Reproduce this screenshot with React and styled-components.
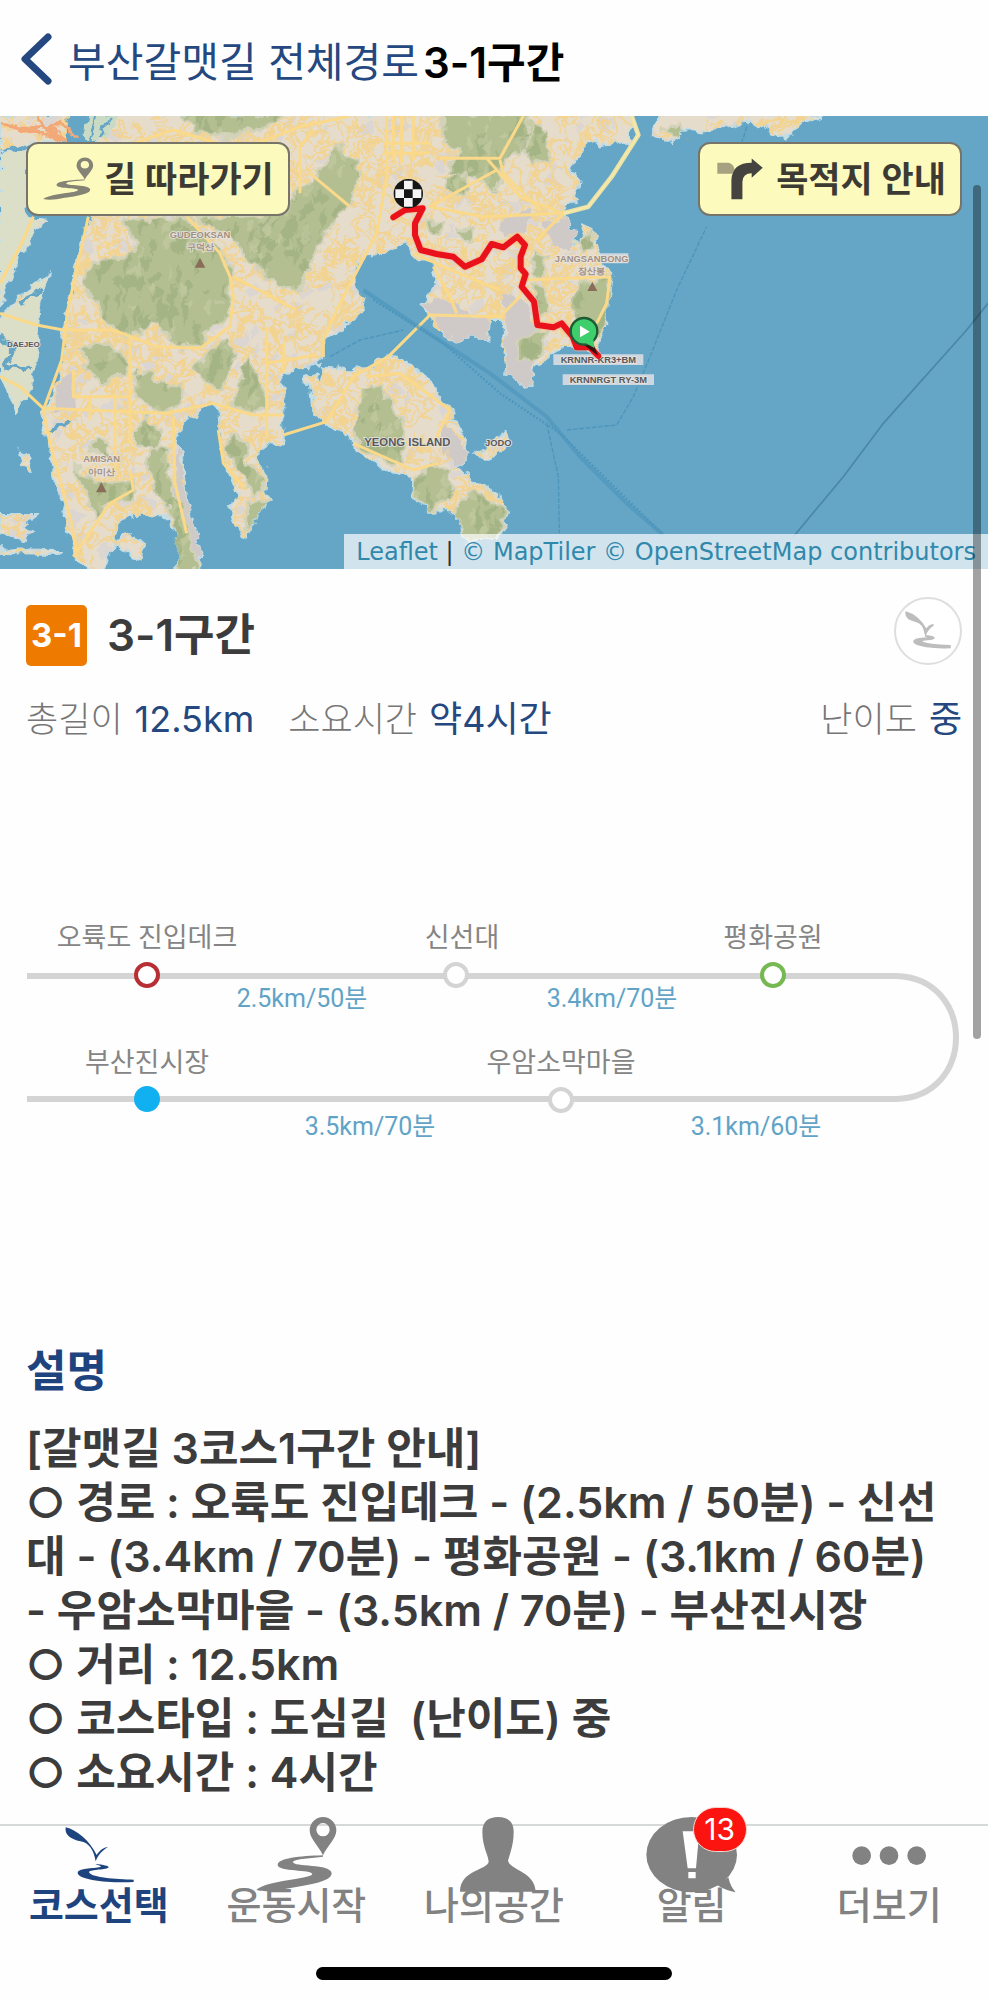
import React from 'react';
import styled, { createGlobalStyle } from "styled-components";

const GlobalStyle = createGlobalStyle`
    * { box-sizing: border-box; }
    body {
        margin: 0;
        background-color: #fefefe;
        color: #3c3c3c;
        font-family: Inter, "Noto Sans CJK KR", sans-serif;
    }
    a { text-decoration: none; color: inherit; }
    button { font-family: inherit; cursor: pointer; }
    h1, h2, h3, p, dl, dd { margin: 0; }
`;

const Screen = styled.div`
    position: relative;
    display: flex;
    flex-direction: column;
    min-height: 100vh;
`;

const Header = styled.header`
    display: flex;
    align-items: center;
    gap: 4px;
    height: 116px;
    padding: 2px 20px 0;
    font-size: 41px;
`;
const BackLink = styled.a`
    display: flex;
    align-items: center;
    gap: 16px;
    color: #24487f;
`;
const PageTitle = styled.h1`
    font-size: 42px;
    font-weight: 600;
    color: #000;
`;

const MapArea = styled.section`
    position: relative;
    height: 453px;
    overflow: hidden;
    background-color: #65a5c6;
`;
const MapDrawing = styled.svg`
    display: block;
    width: 100%;
    height: 100%;
`;
const MapButtons = styled.div`
    position: absolute;
    top: 26px;
    left: 26px;
    right: 26px;
    display: flex;
    justify-content: space-between;
`;
const MapButton = styled.button`
    display: flex;
    align-items: center;
    gap: 10px;
    height: 74px;
    padding: 0 14px;
    border: 2px solid #77746a;
    border-radius: 12px;
    background-color: #fcfabd;
    color: #3d3a34;
    font-size: 35px;
    font-weight: 600;
    line-height: 40px;
    white-space: nowrap;
`;
const Attribution = styled.div`
    position: absolute;
    right: 0;
    bottom: 0;
    height: 35px;
    padding: 0 12px;
    background-color: rgba(255, 255, 255, 0.7);
    color: #333;
    font-family: "DejaVu Sans", sans-serif;
    font-size: 24px;
    line-height: 36px;
    white-space: nowrap;

    a { color: #3088ab; }
`;

const Content = styled.main`
    flex: 1;
    padding: 28px 26px 0;
`;
const CourseRow = styled.div`
    display: flex;
    align-items: center;
    gap: 20px;
    height: 76px;
`;
const CourseBadge = styled.span`
    display: flex;
    align-items: center;
    justify-content: center;
    width: 61px;
    height: 61px;
    border-radius: 5px;
    background-color: #ee7a00;
    color: #fff;
    font-size: 33px;
    font-weight: 700;
`;
const CourseName = styled.h2`
    flex: 1;
    font-size: 44px;
    font-weight: 600;
    line-height: 60px;
`;
const StampButton = styled.button`
    align-self: flex-start;
    width: 68px;
    height: 68px;
    padding: 0;
    border: 2px solid #dedede;
    border-radius: 50%;
    background-color: #fff;
    color: #bdbdbd;
`;
const Stats = styled.dl`
    display: flex;
    gap: 34px;
    margin-top: 16px;
    font-size: 36px;
    line-height: 60px;
`;
const Stat = styled.div`
    display: flex;
    gap: 12px;

    &:last-child { margin-left: auto; }
    dt { color: #767676; font-size: 35px; font-weight: 300; }
    dd { color: #24487f; }
`;

const RouteDrawing = styled.svg`
    display: block;
    width: 100%;
    margin-top: 142px;
    font-family: Roboto, "Noto Sans CJK KR", sans-serif;
    font-size: 27px;
    text-anchor: middle;
`;

const Description = styled.section`
    margin-top: 190px;
`;
const DescTitle = styled.h3`
    color: #1e447f;
    font-size: 44px;
    font-weight: 600;
    line-height: 60px;
`;
const DescText = styled.p`
    margin-top: 20px;
    font-size: 43px;
    font-weight: 600;
    line-height: 54px;
    white-space: pre;
`;

const TabBar = styled.nav`
    display: grid;
    grid-template-columns: repeat(5, 1fr);
    height: 143px;
    border-top: 2px solid #d6d9da;
`;
const Tab = styled.a`
    position: relative;
    display: flex;
    flex-direction: column;
    align-items: center;
    margin-top: -9px;
    color: ${(props) => (props.$active ? "#1e447f" : "#828282")};
    font-size: 38px;
    font-weight: ${(props) => (props.$active ? 700 : 500)};
    line-height: 44px;
    white-space: nowrap;

    svg { flex: none; margin-bottom: -10px; }
`;
const AlarmCount = styled.span`
    position: absolute;
    top: -10px;
    left: calc(50% + 1px);
    width: 54px;
    height: 45px;
    border: 1px solid #f7d6cf;
    border-radius: 23px;
    background-color: #fb1410;
    color: #fff;
    font-size: 30px;
    font-weight: 400;
    line-height: 43px;
    text-align: center;
`;
const HomeArea = styled.div`
    display: flex;
    justify-content: center;
    height: 33px;
`;
const HomeBar = styled.div`
    width: 36%;
    height: 13px;
    border-radius: 7px;
    background-color: #000;
`;
const ScrollThumb = styled.div`
    position: absolute;
    top: 185px;
    right: 7px;
    width: 8px;
    height: 854px;
    border-radius: 4px;
    background-color: rgba(0, 0, 0, 0.36);
`;

// map shapes
const LAND = [
    "M0 18H215L195 90L80 98L0 125Z",
    "M0 132L80 118V318L130 330L90 390L50 450L0 590Z",
    "M0 622L60 560L145 490L118 600L110 720L90 830L50 910L30 850L0 800Z",
    "M355 10L320 60L290 100L272 320L245 380L203 600L185 750L155 870L125 900L140 1000L185 1180L220 1330L262 1385H310L335 1310L350 1240L410 1215L500 1212L535 1290V1385H600L605 1310L560 1180L548 1060L530 1000L540 930L590 912L630 880L652 895L655 960L670 1060L720 1150L690 1180L715 1270L740 1285L765 1220L815 1170L795 1150L800 1100L780 1050L770 1020L800 1000L845 1010L850 960V785L950 765L970 740V690L1010 660L1090 600L1100 565L1070 545L1075 450L1180 412L1228 400L1240 450L1290 460L1310 520L1265 580L1290 640L1340 682L1465 684L1470 630L1505 630L1520 790L1560 830L1612 820L1590 790L1690 710L1790 722L1815 660L1830 560L1838 500L1800 440L1775 350L1755 340L1740 400L1715 400L1725 370L1690 310L1728 265L1735 195L1712 190L1725 150L1760 98L1790 90L1800 110L1885 90L1902 50L1890 10Z",
    "M1985 10L1958 75L2018 105L2050 62L2140 60L2250 32L2335 82L2375 78L2405 40L2490 10Z",
    "M910 800L930 795L975 812L960 770L1050 775L1120 765L1165 740L1210 752L1270 790L1350 900L1412 1032L1370 1060L1420 1112L1510 1172L1524 1205L1500 1290L1395 1290L1372 1200L1290 1202L1235 1160V1100L1150 1077L1060 1000L985 945L940 910L935 850Z",
    "M1430 1040L1480 980L1520 965L1530 1000L1490 1040Z",
    "M335 1295L380 1275L432 1300L425 1345L370 1325Z",
    "M0 1215L110 1215L60 1250L100 1265L70 1285L0 1270Z",
    "M0 1318L185 1320L180 1335L0 1332Z",
    "M60 1020L90 1035L98 1080L70 1070Z",
];
const DELTA = "M0 132L80 118V318H130L0 590ZM0 622L145 490V910H0Z";
const GREY = [
    "M1265 580L1310 560L1465 640V684H1340Z",
    "M1512 550L1560 560L1600 640L1625 690L1590 790L1612 820L1560 830L1520 790Z",
    "M1630 340L1700 320L1735 380L1690 420L1640 390Z",
    "M1110 510L1225 395L1240 420L1150 480Z",
    "M180 800L220 790L225 900H160Z",
    "M530 1000L560 1180L605 1310L595 1377L520 1180Z",
    "M1340 940L1412 1032L1370 1060L1310 990Z",
    "M1500 330L1590 300L1590 370L1510 380Z",
];
const HILLS = [
    "M540 10L600 70L680 80L740 70L820 40L850 10Z",
    "M1010 95L1030 130L1070 150L1085 190L1060 230L1065 280L1000 330L960 400L930 460L900 540L830 530L740 440L690 380L580 320H720L860 310L880 250L950 200L985 140Z",
    "M370 330L560 320L600 360L660 420L695 490L690 620L640 650L600 700L540 720L470 640L390 680L320 640L290 580L250 520L270 460L380 440L410 400Z",
    "M240 710L320 700L385 740L380 790L310 820L260 780Z",
    "M580 780L620 720L690 690L705 720L670 840L620 810Z",
    "M740 750L775 800L805 890L750 915L700 880Z",
    "M405 790L460 785L465 820L540 830L545 880L490 910L405 860Z",
    "M410 940L440 915L480 960L475 1020L410 1000Z",
    "M280 990L325 1000L330 1045L270 1020Z",
    "M220 1070L290 1120L405 1110L400 1160L330 1180L290 1220L260 1160Z",
    "M440 1020L500 1010L520 1160L555 1210L570 1300L600 1385H540L520 1230L460 1130Z",
    "M680 975L740 990L740 1050L790 1100L795 1150L760 1160L720 1090L685 1040Z",
    "M740 1180L815 1170L770 1225L735 1270Z",
    "M1090 840L1130 825L1180 890L1215 950L1210 1050L1170 1060L1105 1020L1060 985Z",
    "M1240 1120L1290 1065L1350 1080L1355 1160L1290 1202L1240 1165Z",
    "M1370 1200L1420 1140L1520 1200L1490 1290H1395Z",
    "M1320 10L1600 10L1590 80L1560 130L1510 150L1480 250L1430 210L1340 180L1380 130L1330 90Z",
    "M1590 30L1640 60L1650 150L1600 160L1570 110Z",
    "M1330 200L1400 190L1400 260L1350 250Z",
    "M1740 390L1775 360L1780 420L1745 425Z",
    "M1730 520L1830 500L1830 600L1800 680L1740 640L1715 590Z",
    "M1590 670L1640 660L1620 740L1555 745L1550 700Z",
    "M1600 430L1640 440L1630 500L1600 490Z",
    "M1590 520L1630 530L1650 610L1620 620Z",
    "M1280 330L1330 340L1320 370L1290 360Z",
    "M1370 360L1420 355L1410 395L1380 390Z",
    "M1990 60L2040 40L2060 65L2055 100Z",
];
const ROADS = [
    "M0 610L110 645L190 660H340L470 710L600 715L690 650L700 560L690 500L660 430L560 320",
    "M0 800L60 830L130 895L500 910L640 880L760 915H850",
    "M265 320L203 600L185 750L130 900L150 1000L215 1240L230 1340",
    "M220 780V860H390M270 860V930M345 850V1080M390 680V1000",
    "M970 740V690L1010 600L1130 370L1160 200V18",
    "M1180 18V150M1205 18V160M1240 18V150M1150 100H1290M1150 130H1290",
    "M850 975L980 935L1060 800L1165 740L1290 615L1500 620L1560 560L1570 450",
    "M800 760L950 735M850 700V785M800 650V980M700 500L890 600",
    "M1320 145H1500L1580 0M1460 145L1560 260L1690 310L1610 390",
    "M1500 150L1510 190L1620 300M1490 180L1290 290L1450 320L1690 310",
    "M0 520L60 410L100 320",
    "M370 110L520 60L720 120L900 50L1050 18",
    "M930 190L1050 290M900 250V110L940 60",
    "M220 1340L330 1180L400 1140L390 1080M520 920L525 1120L560 1270",
    "M655 960L670 1060L730 1130M1060 1000L1240 1080L1310 1060",
    "M1100 800L1200 790L1350 900L1310 980",
    "M1565 510L1830 500L1820 580L1790 640",
    "M1240 430L1400 500L1500 540M1300 470L1350 560L1370 610",
];

// small streets, spread with a fixed seed so the map is the same on every render
let seed = 29;
const rand = () => {
    seed = (seed * 16807) % 2147483647;
    return seed / 2147483647;
};
const makeStreets = (count, step) => {
    let d = "";
    for (let i = 0; i < count; i++) {
        let x = rand() * 2450;
        let y = 18 + rand() * 1340;
        d += `M${Math.round(x)} ${Math.round(y)}`;
        for (let j = 0; j < 4; j++) {
            x += (rand() - 0.5) * step;
            y += (rand() - 0.5) * step;
            d += `L${Math.round(x)} ${Math.round(y)}`;
        }
    }
    return d;
};
const makeSpots = (count, w, h) => {
    let d = "";
    for (let i = 0; i < count; i++) {
        const x = Math.round(rand() * 2400);
        const y = Math.round(rand() * 1360);
        const a = Math.round(w * (0.4 + rand()));
        const b = Math.round(h * (0.4 + rand()));
        d += `M${x} ${y}l${a} ${-b}l${Math.round(a / 2)} ${b}l${-a} ${b}z`;
    }
    return d;
};
const streets = makeStreets(2700, 80);
const paleBlocks = makeSpots(600, 30, 20);
const shade = makeSpots(1100, 22, 34);
const light = makeSpots(700, 16, 24);

const ROUTE = "M1180 322L1215 300L1268 295L1245 340L1245 375L1262 420L1310 432L1360 440L1395 470L1445 448L1475 402L1510 412L1552 380L1575 405L1562 440L1562 475L1577 492L1565 530L1602 575L1612 645L1660 652L1685 640L1718 680L1730 712H1770L1795 738";

function CourseMap() {
    return (
        <MapDrawing viewBox="0 18 2964 1359" preserveAspectRatio="xMidYMid slice" role="img" aria-label="3-1구간 지도">
            <defs>
                <clipPath id="land"><path d={LAND.join("")} /></clipPath>
                <clipPath id="hills"><path d={HILLS.join("")} /></clipPath>
                <filter id="rough" filterUnits="userSpaceOnUse" x="-20" y="0" width="3000" height="1400">
                    <feTurbulence type="fractalNoise" baseFrequency="0.025" numOctaves="3" seed="4" />
                    <feDisplacementMap in="SourceGraphic" scale="42" xChannelSelector="R" yChannelSelector="G" />
                </filter>
            </defs>
            <g filter="url(#rough)">
                <path d={LAND.join("")} fill="#e6dccb" stroke="#c2dde6" strokeWidth="6" />
                <g clipPath="url(#land)" fill="none">
                    <path d={paleBlocks} fill="#d9d5d3" opacity="0.9" />
                    <path d={streets} stroke="#f4d28a" strokeWidth="5" opacity="0.9" />
                    <path d={GREY.join("")} fill="#cfcac8" />
                    <path d={DELTA} fill="#dcdfc8" />
                    <path d={HILLS.join("")} fill="#b3bf91" stroke="#d2d2b8" strokeWidth="8" strokeLinejoin="round" />
                </g>
                <g clipPath="url(#hills)">
                    <path d={shade} fill="#98a97a" opacity="0.5" />
                    <path d={light} fill="#c4cba4" opacity="0.6" />
                </g>
                <path d="M205 10H265L255 90H195Z" fill="#65a5c6" />
                <path d="M265 10H355L320 90H250Z" fill="#c9dbc5" />
                <g fill="none" stroke="#65a5c6" strokeWidth="7">
                    <path d="M285 18L268 90M330 18L300 85M0 125L80 98" />
                    <path d="M60 575L130 540M0 680L40 720L20 770L90 780M145 965L205 945" strokeWidth="12" />
                </g>
                <path d="M1070 500Q1075 435 1115 435Q1085 460 1135 520L1120 540L1100 520V570L1070 545Z" fill="#65a5c6" />
                <path d="M0 45L90 55L180 45L230 80M20 45L200 90M110 18L180 85" fill="none" stroke="#f2a877" strokeWidth="12" />
            </g>
            <g fill="none" stroke="#fad98a" strokeLinejoin="round">
                <path d={ROADS.join("")} strokeWidth="9" />
                <path d="M1895 18L1915 75L1835 200L1765 290L1690 310" stroke="#e9e2a6" strokeWidth="14" />
                <path d="M1895 18L1915 75L1835 200L1765 290L1690 310" stroke="#f7e9ad" strokeWidth="5" />
            </g>
            <g fill="none" stroke="#4390b8" strokeWidth="7" opacity="0.75">
                <path d="M1090 540L1240 640L1470 790L1640 920L1740 1040L1880 1180L1990 1275" strokeWidth="12" opacity="0.6" />
                <path d="M1120 570L1330 700L1500 850L1680 970L1990 1275" strokeDasharray="5 6" />
                <path d="M990 740L1080 690L1210 660M1640 940L1675 1100L1678 1270M1700 960L1850 945L1900 860L1950 740L2030 540L2120 350M2240 50L2225 100" strokeWidth="4" strokeDasharray="14 5" />
                <path d="M2380 1280L2530 1100L2650 940L2900 660L2964 580" strokeWidth="5" stroke="#427e9c" />
            </g>
            <g fill="#d9dde1" opacity="0.9">
                <path d="M1660 733H1930V765H1660ZM1688 793H1962V825H1688ZM1795 430H1885V460H1795Z" />
            </g>
            <g fontFamily="Liberation Sans" fontWeight="700" fontSize="28" fill="#56585a" stroke="#e8e4de" strokeWidth="5" paintOrder="stroke" textAnchor="middle">
                <text x="1222" y="1007" fontSize="34">YEONG ISLAND</text>
                <text x="1495" y="1007">JODO</text>
                <text x="70" y="712" fontSize="24">DAEJEO</text>
                <text x="1795" y="759">KRNNR-KR3+BM</text>
                <text x="1825" y="819">KRNNRGT RY-3M</text>
                <g fill="#a08f82">
                    <text x="600" y="384">GUDEOKSAN</text>
                    <text x="600" y="420">구덕산</text>
                    <text x="305" y="1055">AMISAN</text>
                    <text x="305" y="1095">아미산</text>
                    <text x="1775" y="456">JANGSANBONG</text>
                    <text x="1775" y="492">장산봉</text>
                </g>
            </g>
            <path d="M600 443L616 473H584ZM304 1117L320 1147H288ZM1777 515L1792 543H1762Z" fill="#8a6d59" />
            <path d={ROUTE} fill="none" stroke="#f6b3a0" strokeWidth="25" strokeLinejoin="round" opacity="0.5" />
            <path d={ROUTE} fill="none" stroke="#e9121a" strokeWidth="18" strokeLinejoin="round" strokeLinecap="round" />
            <circle cx="1225" cy="251" r="44" fill="#161616" />
            <path d="M1212 212h26v26h-26zM1212 264h26v26h-26zM1186 238h26v26h-26zM1238 238h26v26h-26z" fill="#f4f4f4" />
            <path d="M1745 700L1795 738L1775 690Z" fill="#3c1012" />
            <circle cx="1752" cy="664" r="40" fill="#3fce6c" stroke="#1d5a35" strokeWidth="7" />
            <path d="M1755 698L1783 714L1780 686Z" fill="#3fce6c" />
            <path d="M1740 647V682L1769 665Z" fill="#fff" />
        </MapDrawing>
    );
}

const PATH_PIN = "M970 196C900 198 834 205 834 225C836 246 935 238 938 252C935 268 800 270 770 300C800 308 840 300 860 296C930 285 995 275 996 250C994 220 880 232 880 216C882 206 940 204 970 200ZM970 81A40 40 0 0 0 930 121C930 146 955 165 970 196C985 165 1010 146 1010 121A40 40 0 0 0 970 81ZM970 99A20 20 0 1 1 970 139A20 20 0 1 1 970 99Z";
const PATH_GULL = "M196 112C230 120 268 152 289 195C300 178 312 172 323 171C306 182 295 192 286 214C280 180 266 158 240 154C212 148 192 135 196 112ZM285 222C310 224 325 228 325 232C322 240 270 238 266 246C268 262 350 268 400 269L400 276C330 280 232 270 232 248C234 232 290 236 302 230C300 226 290 225 285 222Z";
const PATH_PERSON = "M1494 81C1465 81 1447 95 1447 125C1447 170 1465 195 1466 215C1462 240 1380 240 1380 305H1607C1605 245 1530 240 1524 212C1530 190 1541 165 1541 125C1541 95 1522 81 1494 81Z";

const tabs = [
    { label: "코스선택", view: "146 81 300 228", art: <path d={PATH_GULL} /> },
    { label: "운동시작", view: "739 81 300 228", art: <path d={PATH_PIN} fillRule="evenodd" /> },
    { label: "나의공간", view: "1332 81 300 228", art: <path d={PATH_PERSON} /> },
    {
        label: "알림",
        view: "1925 81 300 228",
        count: 13,
        art: (
            <>
                <ellipse cx="2074" cy="194" rx="136" ry="113" />
                <path d="M2184 262Q2190 290 2206 307Q2180 303 2150 285Z" />
                <path d="M2047 124H2097L2087 235H2062ZM2064 246H2086V265H2064Z" fill="#fff" />
            </>
        ),
    },
    {
        label: "더보기",
        view: "2518 81 300 228",
        art: (
            <>
                <circle cx="2586" cy="197" r="28" />
                <circle cx="2668" cy="197" r="28" />
                <circle cx="2751" cy="197" r="28" />
            </>
        ),
    },
];

const stops = [
    { name: "오륙도 진입데크", x: 147, y: 84, color: "#b72f34" },
    { name: "신선대", x: 456, y: 84, color: "#d4d4d4", labelX: 462 },
    { name: "평화공원", x: 773, y: 84, color: "#76b852" },
    { name: "부산진시장", x: 147, y: 208, color: "#11b0f0", fill: "#11b0f0" },
    { name: "우암소막마을", x: 561, y: 209, color: "#d4d4d4" },
];
const legs = [
    { text: "2.5km/50분", x: 302, y: 116 },
    { text: "3.4km/70분", x: 612, y: 116 },
    { text: "3.5km/70분", x: 370, y: 244 },
    { text: "3.1km/60분", x: 756, y: 244 },
];

function RouteDiagram() {
    return (
        <RouteDrawing viewBox="26 0 936 260">
            <path d="M27 85H896C976 87 976 206 896 208H27" fill="none" stroke="#d4d4d4" strokeWidth="6" />
            {stops.map((s) => (
                <g key={s.name}>
                    <circle cx={s.x} cy={s.y} r="11" fill={s.fill || "#fff"} stroke={s.color} strokeWidth="4" />
                    <text x={s.labelX || s.x} y={s.y < 100 ? 56 : 181} fill="#858585">{s.name}</text>
                </g>
            ))}
            {legs.map((l) => (
                <text key={l.text} x={l.x} y={l.y} fill="#61a3c6" fontSize="25">{l.text}</text>
            ))}
        </RouteDrawing>
    );
}

const description = `[갈맷길 3코스1구간 안내]
○ 경로 : 오륙도 진입데크 - (2.5km / 50분) - 신선
대 - (3.4km / 70분) - 평화공원 - (3.1km / 60분)
- 우암소막마을 - (3.5km / 70분) - 부산진시장
○ 거리 : 12.5km
○ 코스타입 : 도심길  (난이도) 중
○ 소요시간 : 4시간`;

function App() {
    return (
        <Screen>
            <GlobalStyle />
            <Header>
                <BackLink href="#courses">
                    <svg width="32" height="52" viewBox="0 0 32 52" fill="none" stroke="currentColor" strokeWidth="7" strokeLinecap="round" strokeLinejoin="round">
                        <path d="M28 4L5 26L28 48" />
                    </svg>
                    부산갈맷길 전체경로
                </BackLink>
                <PageTitle>3-1구간</PageTitle>
            </Header>

            <MapArea>
                <CourseMap />
                <MapButtons>
                    <MapButton type="button">
                        <svg width="52" height="44" viewBox="764 78 250 232" preserveAspectRatio="none" fill="#858276">
                            <path d={PATH_PIN} fillRule="evenodd" />
                        </svg>
                        길 따라가기
                    </MapButton>
                    <MapButton type="button">
                        <svg width="52" height="44" viewBox="685 143 146 128">
                            <path d="M692 160H725Q740 165 742 180L735 192H692Z" fill="#a5a181" />
                            <path d="M733 266V210Q735 160 792 160V147L824 174L792 203V190Q766 190 765 215V266Z" fill="#45433f" />
                        </svg>
                        목적지 안내
                    </MapButton>
                </MapButtons>
                <Attribution>
                    <a href="#leaflet">Leaflet</a> | <a href="#maptiler">© MapTiler</a> <a href="#osm">© OpenStreetMap contributors</a>
                </Attribution>
            </MapArea>

            <Content>
                <CourseRow>
                    <CourseBadge>3-1</CourseBadge>
                    <CourseName>3-1구간</CourseName>
                    <StampButton type="button" aria-label="스탬프">
                        <svg width="46" height="40" viewBox="190 105 215 180" fill="currentColor">
                            <path d={PATH_GULL} stroke="currentColor" strokeWidth="8" />
                        </svg>
                    </StampButton>
                </CourseRow>
                <Stats>
                    <Stat><dt>총길이</dt><dd>12.5km</dd></Stat>
                    <Stat><dt>소요시간</dt><dd>약4시간</dd></Stat>
                    <Stat><dt>난이도</dt><dd>중</dd></Stat>
                </Stats>
                <RouteDiagram />
                <Description>
                    <DescTitle>설명</DescTitle>
                    <DescText>{description}</DescText>
                </Description>
            </Content>

            <TabBar>
                {tabs.map((tab, i) => (
                    <Tab key={tab.label} href={`#tab${i}`} $active={i === 0}>
                        <svg width="100" height="76" viewBox={tab.view} fill="currentColor">{tab.art}</svg>
                        {tab.label}
                        {tab.count && <AlarmCount>{tab.count}</AlarmCount>}
                    </Tab>
                ))}
            </TabBar>
            <HomeArea><HomeBar /></HomeArea>
            <ScrollThumb />
        </Screen>
    );
}

export default App;
